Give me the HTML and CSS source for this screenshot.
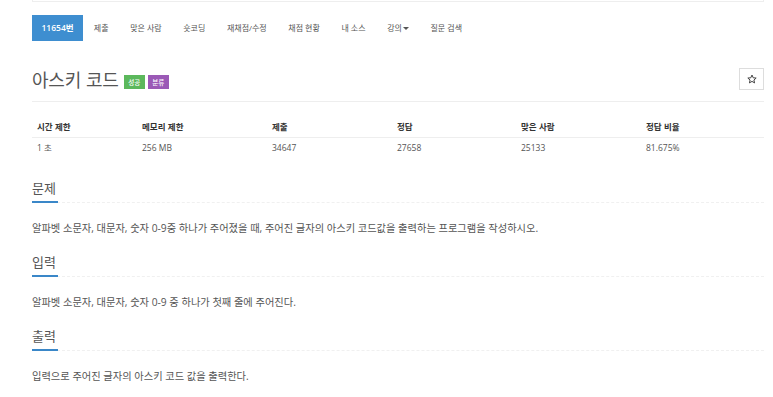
FILE: index.html
```html
<!DOCTYPE html>
<html lang="ko">
<head>
<meta charset="utf-8">
<link rel="stylesheet" href="styles.css">
</head>
<body>
<div class="wrap">
  <div class="topbox"></div>
  <ul class="nav">
    <li class="active">11654번</li>
    <li>제출</li>
    <li>맞은 사람</li>
    <li>숏코딩</li>
    <li>재채점/수정</li>
    <li>채점 현황</li>
    <li>내 소스</li>
    <li>강의<span class="caret"></span></li>
    <li>질문 검색</li>
  </ul>
  <div class="titlebar">
    <h1 class="title">아스키 코드</h1>
    <span class="label green">성공</span>
    <span class="label purple">분류</span>
    <span class="spacer"></span>
    <button class="star">
      <svg width="10" height="10" viewBox="0 0 24 24"><path d="M12 2.5l2.9 6.6 7.1.6-5.4 4.7 1.6 7-6.2-3.7-6.2 3.7 1.6-7L2 9.7l7.1-.6z" fill="none" stroke="#444" stroke-width="2.4" stroke-linejoin="round"/></svg>
    </button>
  </div>
  <table class="info">
    <thead>
      <tr><th class="c1">시간 제한</th><th class="c2">메모리 제한</th><th class="c3">제출</th><th class="c4">정답</th><th class="c5">맞은 사람</th><th>정답 비율</th></tr>
    </thead>
    <tbody>
      <tr><td>1 초</td><td>256 MB</td><td>34647</td><td>27658</td><td>25133</td><td>81.675%</td></tr>
    </tbody>
  </table>
  <section class="sec">
    <div class="headline"><h2>문제</h2></div>
    <p>알파벳 소문자, 대문자, 숫자 0-9중 하나가 주어졌을 때, 주어진 글자의 아스키 코드값을 출력하는 프로그램을 작성하시오.</p>
  </section>
  <section class="sec">
    <div class="headline"><h2>입력</h2></div>
    <p>알파벳 소문자, 대문자, 숫자 0-9 중 하나가 첫째 줄에 주어진다.</p>
  </section>
  <section class="sec">
    <div class="headline"><h2>출력</h2></div>
    <p>입력으로 주어진 글자의 아스키 코드 값을 출력한다.</p>
  </section>
</div>
</body>
</html>
```
FILE: styles.css
```css
* { box-sizing: border-box; }
html, body { margin: 0; padding: 0; background: #fff; }
body {
  font-family: "Open Sans", "Noto Sans CJK KR", sans-serif;
  font-size: 9px;
  color: #555;
  overflow: hidden;
}
.wrap { width: 732px; margin-left: 32px; }
.topbox {
  height: 2px;
  border: 1px solid #eee;
  border-top: none;
}
.nav {
  list-style: none;
  margin: 13px 0 0 0;
  padding: 0;
  display: flex;
  height: 26px;
}
.nav li {
  padding: 0 10.8px;
  line-height: 26px;
  font-size: 8px;
  color: #555;
  white-space: nowrap;
}
.nav li.active {
  background: #3e8ed0;
  color: #fff;
  font-weight: 600;
  font-size: 8.5px;
  padding: 0 8px;
  width: 51px;
  text-align: center;
}
.caret {
  display: inline-block;
  width: 0; height: 0;
  margin-left: 1px;
  vertical-align: middle;
  border-top: 3px solid #555;
  border-left: 3px solid transparent;
  border-right: 3px solid transparent;
}
.titlebar {
  display: flex;
  align-items: center;
  margin-top: 27px;
  height: 22px;
}
.title {
  margin: 0 5px 0 0;
  font-family: "Noto Sans CJK KR", sans-serif;
  font-weight: 400;
  font-size: 18px;
  color: #555;
  line-height: 22px;
  letter-spacing: -0.2px;
}
.label {
  display: inline-block;
  font-family: "Noto Sans CJK KR", sans-serif;
  font-size: 6.5px;
  color: #fff;
  width: 21px;
  text-align: center;
  height: 14px;
  line-height: 14px;
  margin-top: 5px;
  margin-right: 3px;
  font-weight: 500;
}
.green { background: #5cb85c; }
.purple { background: #9b59b6; }
.spacer { flex: 1; }
.star {
  width: 25px; height: 22px;
  border: 1px solid #ddd;
  background: #fff;
  padding: 0;
  display: flex; align-items: center; justify-content: center;
}
.info {
  margin-top: 11px;
  border-top: 1px solid #eee;
  width: 100%;
  border-collapse: collapse;
  table-layout: fixed;
}
.info th, .info td {
  text-align: left;
  padding: 0 5px;
  font-size: 8.5px;
}
.info th {
  font-family: "Noto Sans CJK KR", sans-serif;
  font-weight: 700;
  color: #333;
  height: 36px;
  padding-top: 18px;
  vertical-align: top;
  border-bottom: 1px solid #eee;
  line-height: 12px;
}
.info td { height: 22px; line-height: 12px; padding-top: 4px; vertical-align: top; }
.c1 { width: 105px; }
.c2 { width: 130px; }
.c3 { width: 125px; }
.c4 { width: 124px; }
.c5 { width: 125px; }
.sec { margin-top: 17px; }
.sec:first-of-type { margin-top: 18px; }
.headline {
  border-bottom: 1px dashed #f0f0f0;
  display: flex;
}
.headline h2 {
  margin: 0 0 -1px 0;
  font-family: "Noto Sans CJK KR", sans-serif;
  font-weight: 400;
  font-size: 13px;
  line-height: 20px;
  color: #555;
  border-bottom: 2px solid #3a87c8;
  width: 26px;
  height: 25px;
  white-space: nowrap;
}
.sec p {
  margin: 18px 0 0 0;
  font-size: 10.25px;
  line-height: 14px;
  color: #555;
}
```
